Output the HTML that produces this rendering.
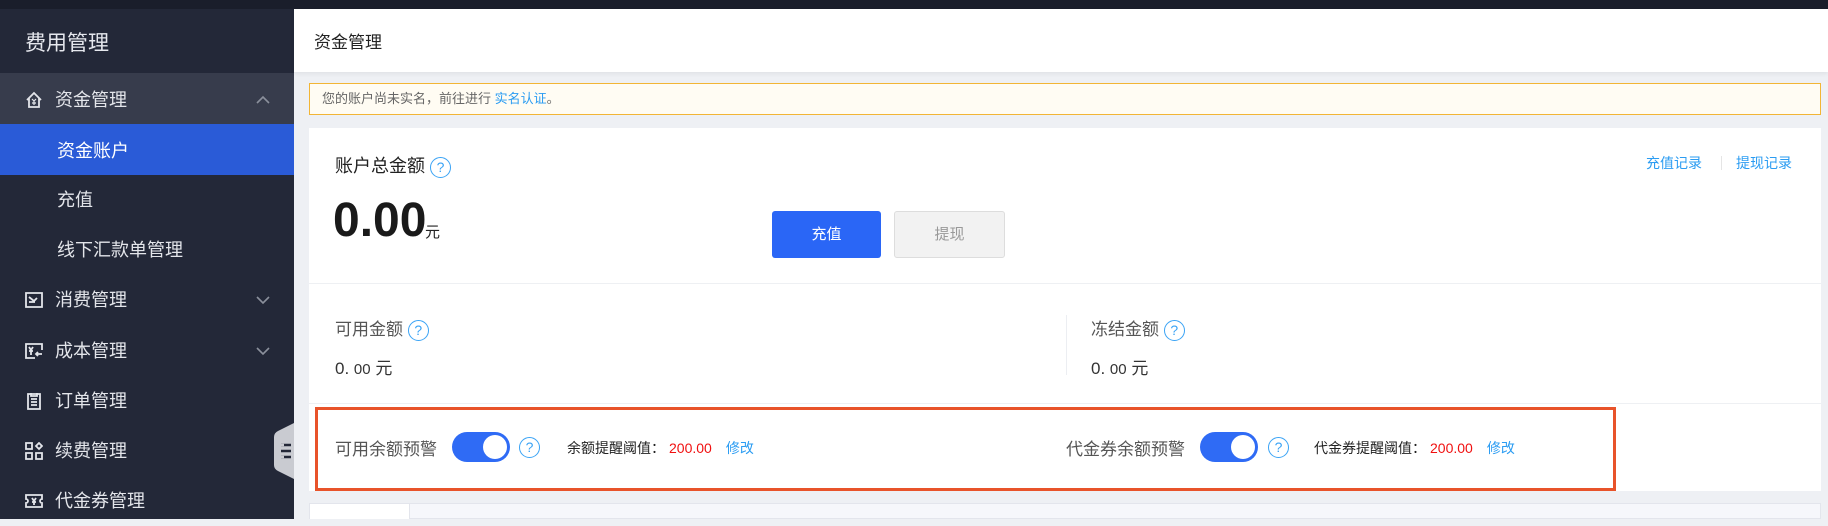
<!DOCTYPE html>
<html><head><meta charset="utf-8"><style>
*{margin:0;padding:0;box-sizing:border-box}
body{width:1828px;height:519px;overflow:hidden;background:#eef0f4;font-family:"Liberation Sans","Noto Sans CJK SC",sans-serif;position:relative}
.a{position:absolute;white-space:nowrap}
.top{left:0;top:0;width:1828px;height:9px;background:#1a1e2b}
.side{left:0;top:9px;width:294px;height:510px;background:#232838}
.row{position:absolute;left:0;width:294px;height:50px;color:#e3e5ea;font-size:18px;line-height:50px}
.ico{position:absolute;left:25px;top:16px;width:18px;height:18px}
.chev{position:absolute;left:256px;top:18px;width:14px;height:14px}
.q{display:inline-block;width:21px;height:21px;border:1.5px solid #3aa3f5;border-radius:50%;color:#3aa3f5;font-size:14px;line-height:18px;text-align:center;vertical-align:middle}
.tog{width:58px;height:30px;border-radius:15px;background:#2f6bf5}
.tog:after{content:"";position:absolute;right:3px;top:3px;width:24px;height:24px;border-radius:50%;background:#fff}
</style></head><body>
<div class="a top"></div>
<div class="a side"></div>
<div class="a" style="left:25px;top:27px;color:#e6e8ee;font-size:21px">费用管理</div>
<div class="a" style="left:0;top:73px;width:294px;height:51px;background:#373c4c"></div>
<div class="a" style="left:0;top:124px;width:294px;height:51px;background:#2a5bd7"></div>
<div class="row" style="top:75px"><svg class="ico" viewBox="0 0 18 18" fill="none" stroke="#e3e5ea" stroke-width="1.8"><path d="M2 9L9 2l7 7M4 7v9h10V7"/><path d="M7 8l2 2 2-2M9 10v4M7 12h4" stroke-width="1.2"/></svg><span style="position:absolute;left:55px">资金管理</span><svg class="chev" viewBox="0 0 14 14" fill="none" stroke="#8b909c" stroke-width="1.6"><path d="M1 10l6-6 6 6"/></svg></div>
<div class="row" style="top:126px;color:#fff"><span style="position:absolute;left:57px">资金账户</span></div>
<div class="row" style="top:175px"><span style="position:absolute;left:57px">充值</span></div>
<div class="row" style="top:225px"><span style="position:absolute;left:57px">线下汇款单管理</span></div>
<div class="row" style="top:275px"><svg class="ico" viewBox="0 0 18 18" fill="none" stroke="#e3e5ea" stroke-width="1.8"><path d="M1 2h16v14H1zM4 6l5 4 3-3M4 11h6"/></svg><span style="position:absolute;left:55px">消费管理</span><svg class="chev" viewBox="0 0 14 14" fill="none" stroke="#8b909c" stroke-width="1.6"><path d="M1 4l6 6 6-6"/></svg></div>
<div class="row" style="top:326px"><svg class="ico" viewBox="0 0 18 18" fill="none" stroke="#e3e5ea" stroke-width="1.8"><path d="M17 8V2H1v14h9M4 5l2 3 2-3M4 9h4M6 8v5M12 12h5M13 10l-2 2 2 2"/></svg><span style="position:absolute;left:55px">成本管理</span><svg class="chev" viewBox="0 0 14 14" fill="none" stroke="#8b909c" stroke-width="1.6"><path d="M1 4l6 6 6-6"/></svg></div>
<div class="row" style="top:376px"><svg class="ico" viewBox="0 0 18 18" fill="none" stroke="#e3e5ea" stroke-width="1.8"><path d="M3 2h12v15H3zM6 1v3h6V1M6 7h6M6 10h6M6 13h6"/></svg><span style="position:absolute;left:55px">订单管理</span></div>
<div class="row" style="top:426px"><svg class="ico" viewBox="0 0 18 18" fill="none" stroke="#e3e5ea" stroke-width="1.8"><path d="M1 1h6v6H1zM1 11h6v6H1zM11 11h6v6h-6zM14 1l3 3-3 3-3-3z"/></svg><span style="position:absolute;left:55px">续费管理</span></div>
<div class="row" style="top:476px"><svg class="ico" viewBox="0 0 18 18" fill="none" stroke="#e3e5ea" stroke-width="1.8"><path d="M1 3h16v4a2 2 0 000 4v4H1v-4a2 2 0 000-4zM7 6l2 3 2-3M9 9v4M7 10h4"/></svg><span style="position:absolute;left:55px">代金券管理</span></div>
<svg class="a" style="left:274px;top:423px" width="20" height="56" viewBox="0 0 20 56"><path d="M20 0L4 8Q0 10 0 14v28q0 4 4 6l16 8z" fill="#c9cbd1"/><path d="M7 22h10M7 28h10M7 34h10" stroke="#232838" stroke-width="2.4"/><path d="M7 22h3M7 34h3" stroke="#c9cbd1" stroke-width="2.6"/></svg>
<div class="a" style="left:294px;top:9px;width:1534px;height:63px;background:#fff;box-shadow:0 2px 4px rgba(0,0,0,.06)"></div>
<div class="a" style="left:314px;top:28px;font-size:17px;color:#222">资金管理</div>
<div class="a" style="left:309px;top:83px;width:1512px;height:32px;background:#fffcf3;border:1px solid #f2b535;font-size:13px;color:#666;line-height:30px;padding-left:12px">您的账户尚未实名，前往进行 <span style="color:#2b9cf2">实名认证</span>。</div>
<div class="a" style="left:309px;top:128px;width:1512px;height:363px;background:#fff"></div>
<div class="a" style="left:335px;top:152px;font-size:18px;color:#222">账户总金额 <span class="q">?</span></div>
<div class="a" style="left:333px;top:195px;font-size:48px;font-weight:bold;color:#1a1a1a;line-height:52px">0.00</div>
<div class="a" style="left:425px;top:221px;font-size:15px;color:#222">元</div>
<div class="a" style="left:772px;top:211px;width:109px;height:47px;background:#2a66f6;border-radius:3px;color:#fff;font-size:15px;line-height:47px;text-align:center">充值</div>
<div class="a" style="left:894px;top:211px;width:111px;height:47px;background:#f2f2f2;border:1px solid #ddd;border-radius:3px;color:#999;font-size:15px;line-height:45px;text-align:center">提现</div>
<div class="a" style="left:1646px;top:153px;font-size:14px;color:#2b9cf2">充值记录</div>
<div class="a" style="left:1721px;top:156px;width:1px;height:14px;background:#e5e5e5"></div>
<div class="a" style="left:1736px;top:153px;font-size:14px;color:#2b9cf2">提现记录</div>
<div class="a" style="left:309px;top:283px;width:1512px;height:1px;background:#eef0f3"></div>
<div class="a" style="left:335px;top:315px;font-size:17px;color:#555">可用金额 <span class="q">?</span></div>
<div class="a" style="left:335px;top:354px;font-size:17px;color:#333">0. <span style="font-size:15px">00</span> 元</div>
<div class="a" style="left:1066px;top:315px;width:1px;height:60px;background:#eceef2"></div>
<div class="a" style="left:1091px;top:315px;font-size:17px;color:#555">冻结金额 <span class="q">?</span></div>
<div class="a" style="left:1091px;top:354px;font-size:17px;color:#333">0. <span style="font-size:15px">00</span> 元</div>
<div class="a" style="left:309px;top:403px;width:1512px;height:1px;background:#eef0f3"></div>
<div class="a" style="left:315px;top:407px;width:1301px;height:84px;border:3px solid #e8532a"></div>
<div class="a" style="left:335px;top:435px;font-size:17px;color:#555">可用余额预警</div>
<div class="a tog" style="left:452px;top:432px"></div>
<div class="a" style="left:519px;top:437px"><span class="q">?</span></div>
<div class="a" style="left:567px;top:438px;font-size:14px;color:#222">余额提醒阈值：<span style="color:#f01010;margin-left:4px">200.00</span><span style="color:#2b9cf2;margin-left:14px">修改</span></div>
<div class="a" style="left:1066px;top:435px;font-size:17px;color:#555">代金券余额预警</div>
<div class="a tog" style="left:1200px;top:432px"></div>
<div class="a" style="left:1268px;top:437px"><span class="q">?</span></div>
<div class="a" style="left:1314px;top:438px;font-size:14px;color:#222">代金券提醒阈值：<span style="color:#f01010;margin-left:4px">200.00</span><span style="color:#2b9cf2;margin-left:14px">修改</span></div>
<div class="a" style="left:309px;top:503px;width:1512px;height:16px;background:#f6f7fb;border:1px solid #e3e5ec"></div>
<div class="a" style="left:309px;top:503px;width:101px;height:16px;background:#fff;border:1px solid #e3e5ec;border-bottom:none"></div>
</body></html>
